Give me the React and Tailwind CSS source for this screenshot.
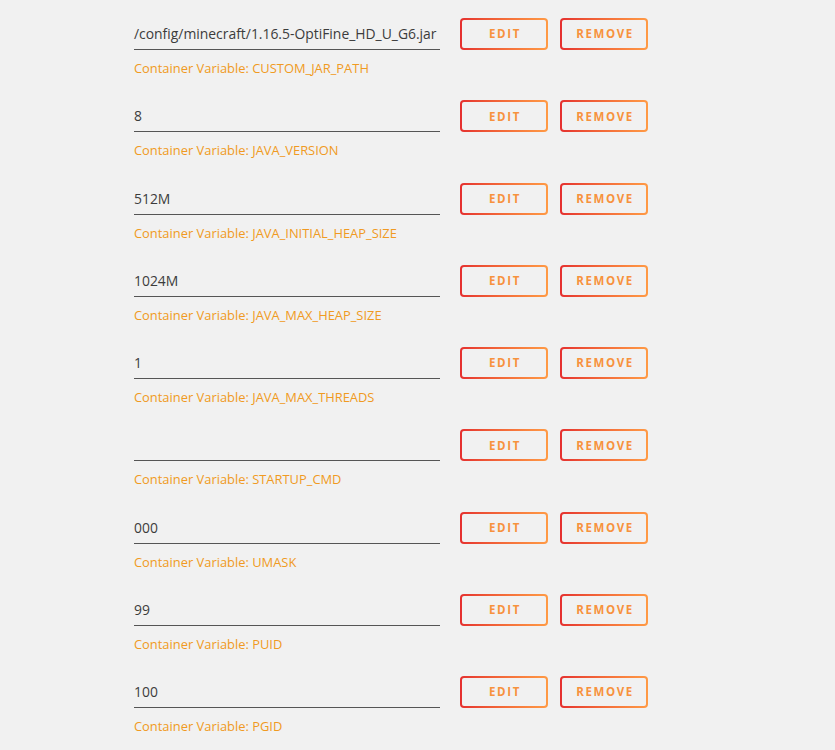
import React from 'react';

const variables = [
  { value: '/config/minecraft/1.16.5-OptiFine_HD_U_G6.jar', name: 'CUSTOM_JAR_PATH' },
  { value: '8', name: 'JAVA_VERSION' },
  { value: '512M', name: 'JAVA_INITIAL_HEAP_SIZE' },
  { value: '1024M', name: 'JAVA_MAX_HEAP_SIZE' },
  { value: '1', name: 'JAVA_MAX_THREADS' },
  { value: '', name: 'STARTUP_CMD' },
  { value: '000', name: 'UMASK' },
  { value: '99', name: 'PUID' },
  { value: '100', name: 'PGID' },
];

function OutlineButton({ children }) {
  return (
    <button className="w-[88px] h-[32px] rounded-[4px] p-[2px] bg-gradient-to-r from-[#e52f2f] to-[#ff9a45]">
      <span className="flex h-full w-full items-center justify-center rounded-[2px] bg-[#f1f1f1] text-[11.5px] font-bold tracking-[0.14em] text-[#f7923d] pl-[2px]">
        {children}
      </span>
    </button>
  );
}

export default function App() {
  return (
    <div className="min-h-[750px] bg-[#f1f1f1] pt-[18px] pl-[134px] font-['Open_Sans','Noto_Sans',sans-serif]">
      {variables.map((v) => (
        <div key={v.name} className="h-[82.25px]">
          <div className="flex items-start">
            <div className="w-[306px] h-[32px] border-b border-[#555] text-[13.9px] leading-[31px] text-[#3c3c3c] whitespace-nowrap">
              {v.value}
            </div>
            <div className="ml-[20px] flex gap-[12px]">
              <OutlineButton>EDIT</OutlineButton>
              <OutlineButton>REMOVE</OutlineButton>
            </div>
          </div>
          <div className="mt-[9px] text-[12.9px] leading-[18px] text-[#f09a22]">
            Container Variable: {v.name}
          </div>
        </div>
      ))}
    </div>
  );
}
